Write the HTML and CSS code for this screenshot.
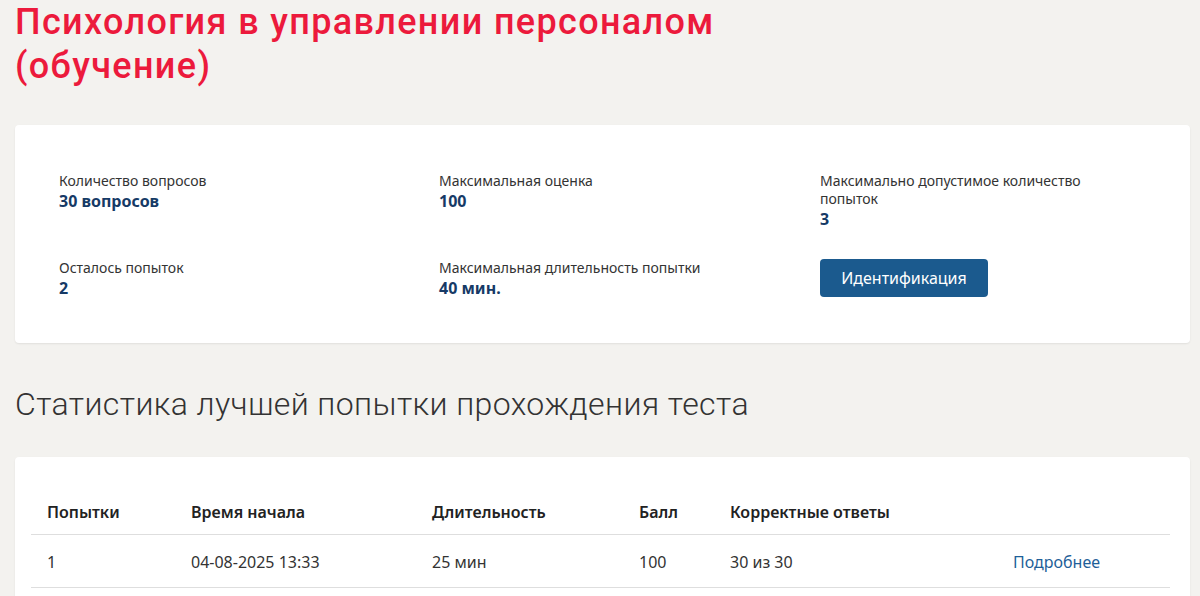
FILE: index.html
```html
<!DOCTYPE html>
<html lang="ru">
<head>
<meta charset="utf-8">
<title>Психология в управлении персоналом (обучение)</title>
<link rel="stylesheet" href="styles.css">
</head>
<body>
<main class="page">
  <h1 class="title">Психология в управлении персоналом<br>(обучение)</h1>

  <section class="card info">
    <div class="info-grid">
      <div class="item">
        <div class="label">Количество вопросов</div>
        <div class="value">30 вопросов</div>
      </div>
      <div class="item">
        <div class="label">Максимальная оценка</div>
        <div class="value">100</div>
      </div>
      <div class="item">
        <div class="label">Максимально допустимое количество попыток</div>
        <div class="value">3</div>
      </div>
      <div class="item">
        <div class="label">Осталось попыток</div>
        <div class="value">2</div>
      </div>
      <div class="item">
        <div class="label">Максимальная длительность попытки</div>
        <div class="value">40 мин.</div>
      </div>
      <div class="item">
        <button class="btn" type="button">Идентификация</button>
      </div>
    </div>
  </section>

  <h2 class="subtitle">Статистика лучшей попытки прохождения теста</h2>

  <section class="card stats">
    <table class="table">
      <colgroup>
        <col class="c1"><col class="c2"><col class="c3"><col class="c4"><col class="c5"><col class="c6">
      </colgroup>
      <thead>
        <tr>
          <th>Попытки</th>
          <th>Время начала</th>
          <th>Длительность</th>
          <th>Балл</th>
          <th>Корректные ответы</th>
          <th></th>
        </tr>
      </thead>
      <tbody>
        <tr>
          <td>1</td>
          <td>04-08-2025 13:33</td>
          <td>25 мин</td>
          <td>100</td>
          <td>30 из 30</td>
          <td><a class="link" href="#">Подробнее</a></td>
        </tr>
      </tbody>
    </table>
  </section>
</main>
</body>
</html>
```

FILE: styles.css
```css
html, body {
  margin: 0;
  padding: 0;
}
body {
  background: #f3f2ef;
  font-family: "Noto Sans", "Open Sans", sans-serif;
  color: #333;
}
.page {
  padding: 0 10px 0 15px;
}
.title {
  margin: 0;
  padding-top: 0;
  font-family: Roboto, sans-serif;
  font-weight: 500;
  font-size: 36px;
  line-height: 44px;
  letter-spacing: 1.35px;
  color: #ec1a3c;
}
.card {
  background: #fff;
  border-radius: 4px;
  box-shadow: 0 1px 2px rgba(0,0,0,0.08);
}
.info {
  margin-top: 37px;
  padding: 47px 44px 44px;
}
.info-grid {
  display: grid;
  grid-template-columns: 336px 337px 1fr;
  column-gap: 44px;
  row-gap: 29px;
}
.label {
  font-size: 14px;
  line-height: 18px;
  color: #333;
  max-width: 300px;
}
.value {
  font-size: 16px;
  line-height: 22px;
  font-weight: 700;
  color: #163a66;
}
.btn {
  display: block;
  width: 168px;
  height: 38px;
  border: 0;
  border-radius: 4px;
  background: #1b5a8e;
  color: #fff;
  font-family: "Noto Sans", "Open Sans", sans-serif;
  font-size: 16px;
  cursor: pointer;
}
.subtitle {
  margin: 41px 0 0;
  font-family: Roboto, sans-serif;
  font-weight: 300;
  font-size: 32px;
  line-height: 40px;
  letter-spacing: 0.4px;
  color: #333;
}
.stats {
  margin-top: 33px;
  padding: 33px 20px 20px 16px;
}
.table {
  width: 100%;
  border-collapse: collapse;
  font-size: 16px;
}
.c1 { width: 144px; }
.c2 { width: 241px; }
.c3 { width: 207px; }
.c4 { width: 91px; }
.c5 { width: 283px; }
.table th, .table td {
  text-align: left;
  line-height: 22px;
  border-bottom: 1px solid #dedede;
}
.table th {
  padding: 11px 16px 11px;
  font-weight: 600;
  color: #222;
}
.table td {
  padding: 16px 16px 14px;
  color: #333;
}
.link {
  color: #1f5f99;
  text-decoration: none;
}
```
